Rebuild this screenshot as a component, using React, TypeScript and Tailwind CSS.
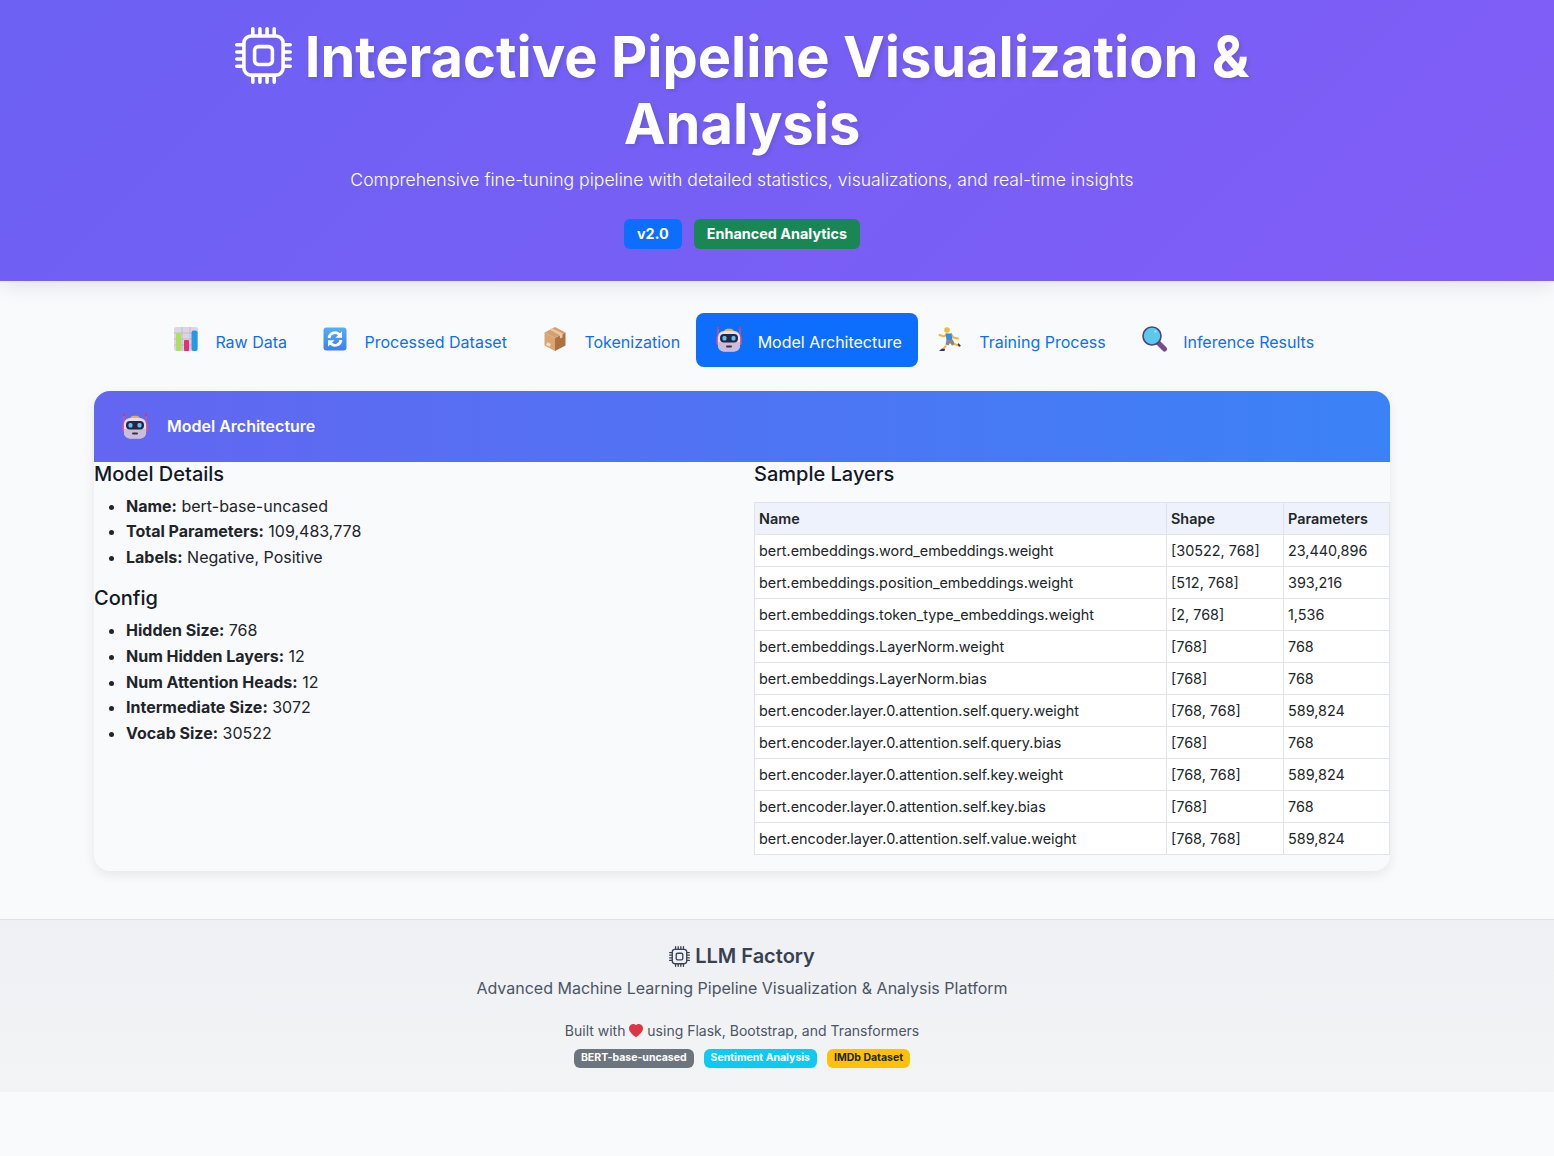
import React from "react";
import { BsCpu, BsHeartFill } from "react-icons/bs";

const ChartIcon = () => (
  <svg width="26" height="26" viewBox="1 0 26 26">
    <rect x="1" y="1" width="24" height="24" rx="2" fill="#dcd6e2" />
    <path d="M1 7h24M1 13h24M1 19h24M9 1v24M17 1v24" stroke="#bdb6c6" strokeWidth="0.8" />
    <rect x="3" y="7" width="5" height="18" rx="1.500" fill="#a6e35c" />
    <rect x="11" y="14" width="5" height="11" rx="1" fill="#e8306e" />
    <rect x="18.500" y="4.500" width="6" height="20.500" rx="2" fill="#1f9be8" />
  </svg>
);
const SyncIcon = () => (
  <svg width="24" height="24" viewBox="0 0 24 24">
    <defs>
      <linearGradient id="syncg" x1="0" y1="0" x2="0" y2="1">
        <stop offset="0" stopColor="#55aef6" />
        <stop offset="1" stopColor="#3d80ea" />
      </linearGradient>
    </defs>
    <rect x="0.500" y="0.500" width="23" height="23" rx="3" fill="url(#syncg)" />
    <path d="M6 11a6 6 0 0 1 10.200-3.600" fill="none" stroke="#fff" strokeWidth="2.800" />
    <path d="M19 4.200v6.500h-6.500z" fill="#fff" />
    <path d="M18 13a6 6 0 0 1-10.200 3.600" fill="none" stroke="#fff" strokeWidth="2.800" />
    <path d="M5 19.800v-6.500h6.500z" fill="#fff" />
  </svg>
);
const BoxIcon = () => (
  <svg width="24" height="26" viewBox="0 0 24 26">
    <path d="M12 12v13L1.500 19.500v-13z" fill="#dba56f" />
    <path d="M12 12v13l10.500-5.500v-13z" fill="#ad7243" />
    <path d="M12 1l10.500 5.500L12 12 1.500 6.500z" fill="#d3a072" />
    <path d="M6.500 3.600l10.500 5.600v3.300l2.500-1.300V7.600L9 2.300z" fill="#ecc9a2" />
    <rect x="3.500" y="17" width="4" height="3" fill="#efdfce" transform="rotate(25 5.500 18.500)" />
  </svg>
);
const RobotIcon = () => (
  <svg width="26" height="26" viewBox="0 0 26 26">
    <path d="M2 2.500v10M24 2.500v10" stroke="#e0557e" strokeWidth="1.200" />
    <circle cx="2" cy="2" r="1.200" fill="#ee2f5c" />
    <circle cx="24" cy="2" r="1.200" fill="#ee2f5c" />
    <path d="M8.500 4.500c0-2.500 9-2.500 9 0V6h-9z" fill="#e6b62f" />
    <rect x="0.500" y="10" width="3" height="9" rx="1.500" fill="#e25a86" />
    <rect x="22.500" y="10" width="3" height="9" rx="1.500" fill="#e25a86" />
    <rect x="2" y="5" width="22" height="20.500" rx="6" fill="#e6dcec" />
    <path d="M2 16h22v3.500a6 6 0 0 1-6 6H8a6 6 0 0 1-6-6z" fill="#cdbcd9" />
    <rect x="4" y="8" width="18" height="8.500" rx="4" fill="#262545" />
    <rect x="6.500" y="10" width="4" height="4.500" rx="1.500" fill="#5cc4f2" />
    <rect x="15.500" y="10" width="4" height="4.500" rx="1.500" fill="#5cc4f2" />
    <rect x="10" y="19.500" width="6" height="2" rx="1" fill="#37304f" />
  </svg>
);
const RunnerIcon = () => (
  <svg width="24" height="25" viewBox="0 0 24 25">
    <circle cx="9" cy="3" r="2.800" fill="#f5b82e" />
    <path d="M9 7.500L6 9.500 1.500 8" fill="none" stroke="#f5b82e" strokeWidth="2" strokeLinecap="round" />
    <path d="M13 7l2.500 3.500 4.500 1" fill="none" stroke="#f5b82e" strokeWidth="2" strokeLinecap="round" />
    <path d="M7.500 6.500h6l1 7H8.500z" fill="#2f8fe0" />
    <path d="M8.500 13h6.500l2 4.500-3 1-2-2.500-1.500 2.500-3-1z" fill="#8a8790" />
    <path d="M8 18.500L5.500 22" stroke="#f5b82e" strokeWidth="2" />
    <path d="M16 17l5 1.500" stroke="#f5b82e" strokeWidth="2" />
    <path d="M1 24h5.500l.5-2-3-.5z" fill="#3d2f6b" />
    <path d="M20.500 16l2.500 3-1.800.7-1.500-2z" fill="#3d2f6b" />
  </svg>
);
const SearchIcon = () => (
  <svg width="26" height="26" viewBox="0 0 26 26">
    <path d="M16 16.500l6.500 6.500" stroke="#7b4a8c" strokeWidth="5" strokeLinecap="round" />
    <circle cx="10" cy="10" r="9" fill="#5cc9ec" stroke="#4e4474" strokeWidth="1.600" />
    <circle cx="13.500" cy="5.500" r="1.100" fill="#b8ecfa" />
  </svg>
);

const tabs = [
  { label: "Raw Data", icon: <ChartIcon /> },
  { label: "Processed Dataset", icon: <SyncIcon /> },
  { label: "Tokenization", icon: <BoxIcon /> },
  { label: "Model Architecture", icon: <RobotIcon />, active: true },
  { label: "Training Process", icon: <RunnerIcon /> },
  { label: "Inference Results", icon: <SearchIcon /> },
];

const details: [string, string][] = [
  ["Name:", "bert-base-uncased"],
  ["Total Parameters:", "109,483,778"],
  ["Labels:", "Negative, Positive"],
];
const config: [string, string][] = [
  ["Hidden Size:", "768"],
  ["Num Hidden Layers:", "12"],
  ["Num Attention Heads:", "12"],
  ["Intermediate Size:", "3072"],
  ["Vocab Size:", "30522"],
];
const layers = [
  ["bert.embeddings.word_embeddings.weight", "[30522, 768]", "23,440,896"],
  ["bert.embeddings.position_embeddings.weight", "[512, 768]", "393,216"],
  ["bert.embeddings.token_type_embeddings.weight", "[2, 768]", "1,536"],
  ["bert.embeddings.LayerNorm.weight", "[768]", "768"],
  ["bert.embeddings.LayerNorm.bias", "[768]", "768"],
  ["bert.encoder.layer.0.attention.self.query.weight", "[768, 768]", "589,824"],
  ["bert.encoder.layer.0.attention.self.query.bias", "[768]", "768"],
  ["bert.encoder.layer.0.attention.self.key.weight", "[768, 768]", "589,824"],
  ["bert.encoder.layer.0.attention.self.key.bias", "[768]", "768"],
  ["bert.encoder.layer.0.attention.self.value.weight", "[768, 768]", "589,824"],
];

const Facts = ({ items, className }: { items: [string, string][]; className: string }) => (
  <ul className={`list-disc pl-8 ${className}`}>
    {items.map(([k, v]) => (
      <li key={k}>
        <span className="font-bold">{k}</span> {v}
      </li>
    ))}
  </ul>
);

export default function App() {
  return (
    <div className="min-h-[1156px] bg-[#f9fafc] text-[16px] leading-[1.6] text-[#212529] font-['Inter',sans-serif]">
      <header className="relative z-10 h-[281px] bg-[linear-gradient(135deg,#6c61f3,#815df6)] pt-6 text-white shadow-[0_4px_20px_rgba(0,0,0,0.1)]">
        <div className="w-[1484px] text-center">
          <h1 className="mx-auto mb-[9px] w-[1200px] text-[56px] leading-[66.500px] font-bold [text-shadow:2px_2px_4px_rgba(0,0,0,0.1)]">
            <BsCpu className="mr-[13px] inline-block align-[-7px] text-[57px]" />
            Interactive Pipeline Visualization &amp; Analysis
          </h1>
          <p className="mb-[25px] text-[17.600px] leading-[28.200px] font-light">
            Comprehensive fine-tuning pipeline with detailed statistics, visualizations, and real-time insights
          </p>
          <div className="flex justify-center gap-3">
            <span className="flex h-[30px] items-center rounded-md bg-[#0d6efd] px-[13px] pb-[2px] text-[14.400px] font-bold">v2.0</span>
            <span className="flex h-[30px] items-center rounded-md bg-[#198754] px-[13px] pb-[2px] text-[14.400px] font-bold">Enhanced Analytics</span>
          </div>
        </div>
      </header>

      <main className="ml-[94px] w-[1296px] pt-8 pb-12">
        <nav className="mb-6 flex justify-center">
          {tabs.map((t) => (
            <div
              key={t.label}
              className={`flex h-[54px] items-center rounded-lg px-4 ${t.active ? "bg-[#0d6efd] text-white" : "text-[#0d6efd]"}`}
            >
              <span className="flex w-[45.500px] -translate-y-px items-center pl-1">{t.icon}</span>
              <span className="pt-[6px]">{t.label}</span>
            </div>
          ))}
        </nav>

        <section className="overflow-hidden rounded-2xl bg-[#f9fafc] shadow-[0_4px_12px_rgba(0,0,0,0.08)]">
          <div className="flex h-[71px] items-center bg-[linear-gradient(90deg,#6366f1,#3b82f6)] pl-7 font-semibold text-white">
            <span className="flex w-[45px] -translate-y-px items-center">
              <RobotIcon />
            </span>
            Model Architecture
          </div>
          <div className="flex pb-4">
            <div className="w-[660px]">
              <h5 className="mb-[7.600px] text-[20px] leading-[24px] font-medium text-[#111827]">Model Details</h5>
              <Facts items={details} className="mb-[15.800px]" />
              <h5 className="mb-[8.200px] text-[20px] leading-[24px] font-medium text-[#111827]">Config</h5>
              <Facts items={config} className="" />
            </div>
            <div className="w-[636px]">
              <h5 className="mb-4 text-[20px] leading-[24px] font-medium text-[#111827]">Sample Layers</h5>
              <table className="w-[635px] table-fixed border-collapse text-[14.400px] leading-[23px]">
                <colgroup>
                  <col className="w-[412px]" />
                  <col className="w-[117px]" />
                  <col className="w-[106px]" />
                </colgroup>
                <thead>
                  <tr className="bg-[#eef2fd]">
                    <th className="border border-[#e2e2ea] p-1 text-left font-semibold">Name</th>
                    <th className="border border-[#e2e2ea] p-1 text-left font-semibold">Shape</th>
                    <th className="border border-[#e2e2ea] p-1 text-left font-semibold">Parameters</th>
                  </tr>
                </thead>
                <tbody className="bg-white">
                  {layers.map((r) => (
                    <tr key={r[0]}>
                      {r.map((c, i) => (
                        <td key={i} className="border border-[#e2e2ea] p-1">{c}</td>
                      ))}
                    </tr>
                  ))}
                </tbody>
              </table>
            </div>
          </div>
        </section>
      </main>

      <footer className="h-[173px] border-t border-[#dee2e6] bg-[linear-gradient(180deg,#eef0f3,#f3f4f6)] pt-6 text-[#4b5563]">
        <div className="w-[1484px] text-center">
          <div className="mb-2 flex items-center justify-center gap-[5px] text-[20px] leading-[24px] font-semibold text-[#374151]">
            <BsCpu className="text-[21px]" />
            LLM Factory
          </div>
          <p className="mb-[18px]">Advanced Machine Learning Pipeline Visualization &amp; Analysis Platform</p>
          <p className="mb-[7px] text-[14px] leading-[22.400px]">
            Built with <BsHeartFill className="inline-block align-[-2px] text-[14px] text-[#dc3545]" /> using Flask, Bootstrap, and Transformers
          </p>
          <div className="flex justify-center gap-[10px] text-[10.500px] leading-[17px] font-bold">
            <span className="rounded-md bg-[#6c757d] px-[7px] pb-[2px] text-white">BERT-base-uncased</span>
            <span className="rounded-md bg-[#0dcaf0] px-[7px] pb-[2px] text-white">Sentiment Analysis</span>
            <span className="rounded-md bg-[#ffc107] px-[7px] pb-[2px] text-[#212529]">IMDb Dataset</span>
          </div>
        </div>
      </footer>
    </div>
  );
}
